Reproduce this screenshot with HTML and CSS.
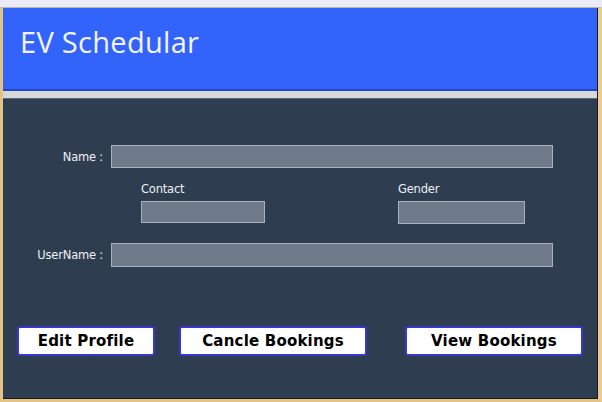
FILE: index.html
```html
<!DOCTYPE html>
<html>
<head>
<meta charset="utf-8">
<link rel="stylesheet" href="styles.css">
</head>
<body>
<div class="topband"></div>
<div class="frame">
  <div class="app">
    <header class="header"><h1 class="title">EV Schedular</h1></header>
    <div class="sep"></div>
    <main class="panel">
      <div class="row row-name">
        <label class="lbl">Name :</label>
        <div class="field field-wide"></div>
      </div>
      <div class="row row-sub">
        <div class="group group-contact">
          <span class="sublbl">Contact</span>
          <div class="field field-contact"></div>
        </div>
        <div class="group group-gender">
          <span class="sublbl">Gender</span>
          <div class="field field-gender"></div>
        </div>
      </div>
      <div class="row row-user">
        <label class="lbl">UserName :</label>
        <div class="field field-wide"></div>
      </div>
      <div class="buttons">
        <button class="btn btn-edit">Edit Profile</button>
        <button class="btn btn-cancel">Cancle Bookings</button>
        <button class="btn btn-view">View Bookings</button>
      </div>
    </main>
  </div>
</div>
</body>
</html>
```
FILE: styles.css
```css
html, body {
  margin: 0;
  padding: 0;
}
body {
  width: 602px;
  height: 402px;
  background: #ebebf7;
  overflow: hidden;
  font-family: "DejaVu Sans", sans-serif;
}
.topband {
  height: 7px;
  background: #ebebf7;
}
.frame {
  height: 395px;
  box-sizing: border-box;
  border-left: 3px solid #e4c486;
  border-right: 4px solid #e8cc92;
  border-bottom: 3px solid #e4c486;
  border-top: 1px solid #b8b8a0;
}
.app {
  height: 100%;
  display: flex;
  flex-direction: column;
  border-right: 1px solid #1a1a1a;
  border-bottom: 1px solid #1a1a1a;
  box-sizing: border-box;
}
.header {
  height: 81px;
  background: #3264fc;
  border-bottom: 2px solid #2646c4;
  box-sizing: content-box;
}
.title {
  margin: 0;
  padding: 14px 0 0 17px;
  font-family: "Open Sans", sans-serif;
  font-weight: 400;
  font-size: 29px;
  line-height: 40px;
  color: #f4f4ff;
  letter-spacing: 0.3px;
}
.sep {
  height: 7px;
  background: #d8d8d8;
  border-bottom: 1px solid #5b6a7a;
}
.panel {
  flex: 1;
  background: #2e3d50;
  padding-top: 46px;
}
.row {
  display: flex;
  align-items: center;
}
.lbl {
  width: 100px;
  margin-right: 8px;
  text-align: right;
  color: #eef0f4;
  font-size: 11.5px;
  letter-spacing: -0.2px;
}
.field {
  box-sizing: border-box;
  background: #6f7b8a;
  border: 1px solid #a9b1bd;
}
.field-wide {
  width: 442px;
  height: 23px;
}
.row-sub {
  margin-top: 14px;
  align-items: flex-start;
}
.group {
  display: flex;
  flex-direction: column;
}
.group-contact {
  margin-left: 138px;
}
.group-gender {
  margin-left: 133px;
}
.sublbl {
  font-size: 11.5px;
  letter-spacing: -0.2px;
  color: #eef0f4;
  line-height: 14px;
  margin-left: 0;
  margin-bottom: 5px;
}
.field-contact {
  width: 124px;
  height: 22px;
}
.field-gender {
  width: 127px;
  height: 23px;
}
.row-user {
  margin-top: 19px;
}
.row-user .field-wide {
  height: 24px;
}
.buttons {
  display: flex;
  margin-top: 59px;
  padding-left: 14px;
}
.btn {
  height: 30px;
  box-sizing: border-box;
  background: #ffffff;
  border: 2px solid #3838d0;
  border-radius: 3px;
  font-family: "DejaVu Sans", sans-serif;
  font-weight: 700;
  font-size: 15px;
  letter-spacing: 0.2px;
  color: #000;
  padding: 0;
}
.btn-edit {
  width: 138px;
}
.btn-cancel {
  width: 188px;
  margin-left: 24px;
}
.btn-view {
  width: 178px;
  margin-left: 38px;
}
```
